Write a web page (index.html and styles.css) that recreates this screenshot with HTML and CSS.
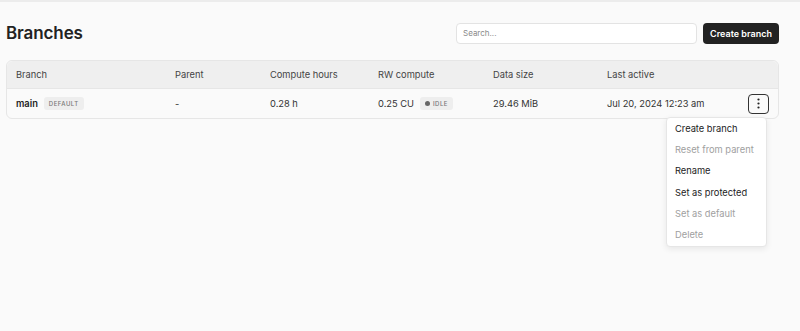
FILE: index.html
```html
<!DOCTYPE html>
<html>
<head>
<meta charset="utf-8">
<link rel="stylesheet" href="styles.css">
</head>
<body>
<div class="page">
  <header class="top">
    <h1 class="title">Branches</h1>
    <div class="actions">
      <input class="search" type="text" placeholder="Search...">
      <button class="btn-primary">Create branch</button>
    </div>
  </header>
  <div class="table">
    <div class="row head">
      <div>Branch</div>
      <div>Parent</div>
      <div>Compute hours</div>
      <div>RW compute</div>
      <div>Data size</div>
      <div>Last active</div>
      <div></div>
    </div>
    <div class="row body">
      <div class="name"><span class="strong">main</span><span class="badge">DEFAULT</span></div>
      <div>-</div>
      <div>0.28 h</div>
      <div class="cu">0.25 CU<span class="badge"><span class="dot"></span>IDLE</span></div>
      <div>29.46 MiB</div>
      <div>Jul 20, 2024 12:23 am</div>
      <div class="menu-cell">
        <button class="kebab" aria-label="More">
          <svg width="3" height="11" viewBox="0 0 3 11"><circle cx="1.5" cy="1.5" r="1.1" fill="#222"/><circle cx="1.5" cy="5.5" r="1.1" fill="#222"/><circle cx="1.5" cy="9.5" r="1.1" fill="#222"/></svg>
        </button>
        <ul class="menu">
          <li>Create branch</li>
          <li class="disabled">Reset from parent</li>
          <li>Rename</li>
          <li>Set as protected</li>
          <li class="disabled">Set as default</li>
          <li class="disabled">Delete</li>
        </ul>
      </div>
    </div>
  </div>
</div>
</body>
</html>
```
FILE: styles.css
```css
* { box-sizing: border-box; }
html, body { margin: 0; height: 100%; }
body {
  background: #fafafa;
  font-family: Inter, "Noto Sans", sans-serif;
  color: #222;
  border-top: 2px solid #ececec;
}
.page { padding: 0 21px 0 6px; }
.top {
  display: flex;
  align-items: center;
  justify-content: space-between;
  height: 58px;
  padding-top: 4px;
}
.title {
  margin: 0;
  font-size: 17px;
  font-weight: 600;
  color: #222;
  letter-spacing: -0.1px;
}
.actions { display: flex; gap: 6px; align-items: center; }
.search {
  width: 241px;
  height: 21px;
  border: 1px solid #e3e3e3;
  border-radius: 4px;
  background: #fff;
  font-family: inherit;
  font-size: 8px;
  padding: 0 6px;
  outline: none;
}
.search::placeholder { color: #8a8a8a; }
.btn-primary {
  width: 76px;
  height: 21px;
  padding: 0;
  border: none;
  border-radius: 4px;
  background: #222;
  color: #fff;
  font-family: inherit;
  font-size: 9px;
  font-weight: 600;
}
.table {
  border: 1px solid #e6e6e6;
  border-radius: 6px;
  font-size: 9.3px;
}
.row {
  display: grid;
  grid-template-columns: 159px 95px 108px 115px 114px 1fr auto;
  align-items: center;
  padding: 0 9px 0 9px;
}
.row.head {
  height: 28px;
  background: #efefef;
  color: #444;
  border-bottom: 1px solid #e6e6e6;
  border-radius: 6px 6px 0 0;
}
.row.body { height: 29px; color: #333; }
.strong { font-weight: 600; color: #222; }
.name, .cu { display: flex; align-items: center; gap: 6px; }
.badge {
  display: inline-flex;
  align-items: center;
  gap: 3px;
  background: #eeeeee;
  color: #777;
  font-size: 6px;
  font-weight: 500;
  letter-spacing: 0.5px;
  padding: 3px 5px;
  border-radius: 3px;
}
.dot { width: 5px; height: 5px; border-radius: 50%; background: #666; }
.menu-cell { position: relative; }
.kebab {
  width: 21px;
  height: 20px;
  display: flex;
  align-items: center;
  justify-content: center;
  border: 1.5px solid #333;
  border-radius: 4px;
  background: #fafafa;
  padding: 0;
}
.menu {
  position: absolute;
  top: 23px;
  right: 2px;
  width: 101px;
  margin: 0;
  padding: 0;
  list-style: none;
  background: #fff;
  border: 1px solid #e6e6e6;
  border-radius: 4px;
  box-shadow: 0 2px 6px rgba(0,0,0,0.08);
  font-size: 9.3px;
}
.menu li { height: 21.4px; line-height: 21.4px; padding: 0 8px; color: #222; }
.menu li.disabled { color: #a0a0a0; }
```
